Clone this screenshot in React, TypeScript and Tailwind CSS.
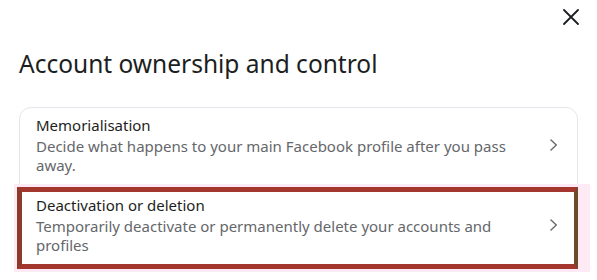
import React from "react";

function Chevron() {
  return (
    <svg width="12" height="12" viewBox="0 0 12 12" fill="none" className="shrink-0">
      <path d="M4 1 L9.3 6 L4 11" stroke="#65676b" strokeWidth="1.4" strokeLinecap="round" strokeLinejoin="round" />
    </svg>
  );
}

export default function App() {
  return (
    <div className="w-[597px] h-[280px] bg-white overflow-hidden text-[#1c1e21]" style={{ fontFamily: '"Noto Sans", "Open Sans", sans-serif' }}>
      <div className="flex justify-end pt-[9px] pr-[18px] h-[25px]">
        <svg width="16" height="16" viewBox="0 0 16 16" fill="none">
          <path d="M1 1 L15 15 M15 1 L1 15" stroke="#1c1e21" strokeWidth="1.8" strokeLinecap="round" />
        </svg>
      </div>
      <h1 className="pl-[19px] mt-[23px] text-[24.5px] leading-[32px] font-normal">Account ownership and control</h1>
      <div className="mx-[19px] mt-[27px] border border-[#e4e6eb] rounded-[12px]">
        <div className="flex items-center pl-[16px] pr-[18px] pt-[7px] pb-[12px]">
          <div className="flex-1 pr-[30px]">
            <div className="text-[15px] leading-[20px] text-[#1c1e21] mb-[2px]">Memorialisation</div>
            <div className="text-[15px] leading-[19px] text-[#65676b]">
              Decide what happens to your main Facebook profile after you pass away.
            </div>
          </div>
          <Chevron />
        </div>
        <div className="relative">
          <div className="absolute -left-[6px] -right-[13px] -top-[3px] -bottom-[4px] bg-[#fdeaf4]" />
          <div className="relative flex items-center pl-[16px] pr-[18px] pt-[8px] pb-[13px] bg-white">
            <div className="flex-1 pr-[30px]">
              <div className="text-[15px] leading-[20px] text-[#1c1e21] mb-[2px]">Deactivation or deletion</div>
              <div className="text-[15px] leading-[19px] text-[#65676b]">
                Temporarily deactivate or permanently delete your accounts and profiles
              </div>
            </div>
            <Chevron />
          </div>
          <div className="absolute -left-[3px] -right-[1px] top-0 -bottom-[1px] border-[5px] border-[#a4372d] border-r-[4px] border-r-[#6e4a2b] border-l-[#8c3a2b]" />
        </div>
      </div>
    </div>
  );
}
